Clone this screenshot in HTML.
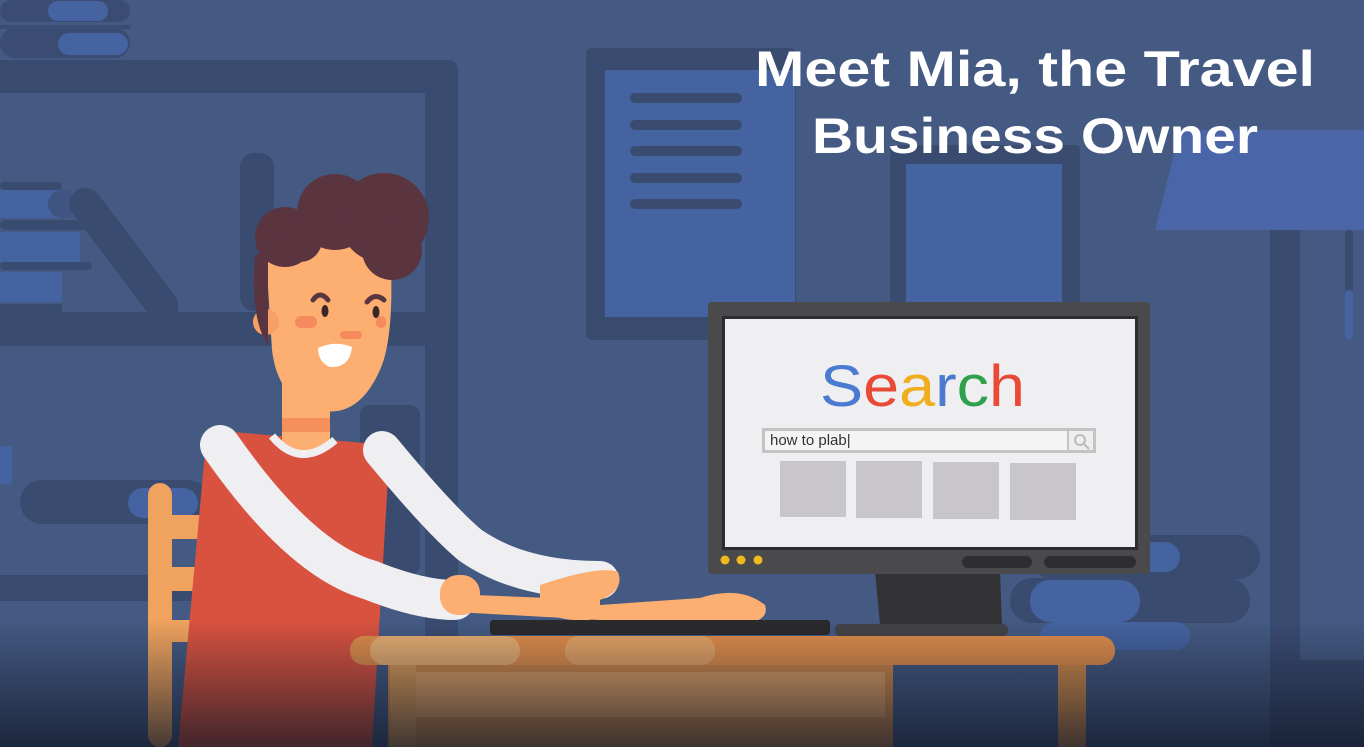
<!DOCTYPE html>
<html><head><meta charset="utf-8"><style>
html,body{margin:0;padding:0;width:1364px;height:747px;overflow:hidden;background:#445a82}
svg{display:block}
</style></head><body>
<svg width="1364" height="747" viewBox="0 0 1364 747" xmlns="http://www.w3.org/2000/svg">
<defs>
<linearGradient id="shade" x1="0" y1="0" x2="0" y2="1">
<stop offset="0" stop-color="#0e1626" stop-opacity="0"/>
<stop offset="1" stop-color="#0e1626" stop-opacity="0.75"/>
</linearGradient>
</defs>
<rect width="1364" height="747" fill="#445a82"/>
<rect x="0" y="0" width="130" height="22" rx="11" fill="#3b4c72"/>
<rect x="48" y="1" width="60" height="20" rx="10" fill="#4563a0"/>
<rect x="0" y="28" width="130" height="30" rx="15" fill="#3b4c72"/>
<rect x="58" y="33" width="70" height="22" rx="11" fill="#4563a0"/>
<rect x="0" y="25" width="130" height="4" fill="#3b4c72"/>
<path d="M0 60 H448 a10 10 0 0 1 10 10 V747 H425 V93 H0 Z" fill="#3a4b70"/>
<rect x="0" y="312" width="425" height="34" fill="#3a4b70"/>
<rect x="0" y="575" width="425" height="26" fill="#3a4b70"/>
<rect x="0" y="182" width="62" height="8" rx="4" fill="#3a4b70"/>
<rect x="0" y="190" width="62" height="28" fill="#4563a0"/>
<rect x="48" y="190" width="30" height="28" rx="14" fill="#3f5482"/>
<rect x="0" y="220" width="92" height="10" rx="5" fill="#3a4b70"/>
<rect x="0" y="232" width="80" height="30" fill="#4563a0"/>
<rect x="0" y="262" width="92" height="8" rx="4" fill="#3a4b70"/>
<rect x="0" y="272" width="62" height="30" fill="#4563a0"/>
<rect x="0" y="304" width="62" height="8" fill="#3a4b70"/>
<rect x="108" y="175" width="32" height="160" rx="16" fill="#3a4b70" transform="rotate(-37 124 255)"/>
<rect x="240" y="153" width="34" height="158" rx="14" fill="#3a4b70"/>
<rect x="20" y="480" width="190" height="44" rx="22" fill="#3a4b70"/>
<rect x="128" y="488" width="70" height="30" rx="15" fill="#4563a0"/>
<rect x="0" y="446" width="12" height="38" fill="#4563a0"/>
<rect x="360" y="405" width="60" height="170" rx="10" fill="#3a4b70"/>
<rect x="586" y="48" width="210" height="292" rx="6" fill="#3a4b70"/>
<rect x="605" y="70" width="190" height="247" fill="#4563a0"/>
<rect x="630" y="93" width="112" height="10" rx="5" fill="#3a4b70"/>
<rect x="630" y="120" width="112" height="10" rx="5" fill="#3a4b70"/>
<rect x="630" y="146" width="112" height="10" rx="5" fill="#3a4b70"/>
<rect x="630" y="173" width="112" height="10" rx="5" fill="#3a4b70"/>
<rect x="630" y="199" width="112" height="10" rx="5" fill="#3a4b70"/>
<rect x="890" y="145" width="190" height="180" rx="4" fill="#3a4b70"/>
<rect x="906" y="164" width="156" height="142" fill="#4563a0"/>
<polygon points="1180,130 1364,130 1364,230 1155,230" fill="#4a66a8"/>
<rect x="1345" y="230" width="8" height="110" rx="4" fill="#3a4b70"/>
<rect x="1345" y="290" width="8" height="50" rx="4" fill="#4563a0"/>
<rect x="1270" y="230" width="30" height="517" fill="#3a4b70"/>
<rect x="1300" y="660" width="64" height="87" fill="#3a4b70"/>
<rect x="1030" y="535" width="230" height="44" rx="22" fill="#3a4b70"/>
<rect x="1130" y="542" width="50" height="30" rx="15" fill="#4563a0"/>
<rect x="1010" y="578" width="240" height="45" rx="22" fill="#3a4b70"/>
<rect x="1030" y="580" width="110" height="42" rx="20" fill="#4563a0"/>
<rect x="1040" y="622" width="150" height="28" rx="14" fill="#4563a0"/>
<rect x="148" y="483" width="24" height="264" rx="12" fill="#f0a35e"/>
<rect x="160" y="515" width="50" height="24" fill="#f0a35e"/>
<rect x="160" y="567" width="50" height="24" fill="#f0a35e"/>
<rect x="160" y="620" width="50" height="22" fill="#f0a35e"/>
<polygon points="207,430 390,445 372,747 178,747" fill="#d9523f"/>
<path d="M282 370 L282 445 Q302 465 330 445 L330 370 Z" fill="#fdae71"/>
<path d="M282 418 L330 418 L330 432 L282 432Z" fill="#f5905a"/>
<path d="M272 436 Q300 470 335 440" stroke="#efeff2" stroke-width="8" fill="none"/>
<path d="M382 450 Q440 520 470 545 Q520 580 600 580" stroke="#efeff2" stroke-width="38" fill="none" stroke-linecap="round"/>
<path d="M220 445 Q300 560 370 580 Q420 600 455 600" stroke="#efeff2" stroke-width="40" fill="none" stroke-linecap="round"/>
<path d="M450 594 L600 600 L600 620 L455 612 Z" fill="#fdae71"/>
<rect x="440" y="575" width="40" height="40" rx="18" fill="#fdae71"/>
<path d="M540 585 Q600 565 618 572 Q625 590 600 600 L590 620 Q560 622 540 610Z" fill="#fdae71"/>
<path d="M600 605 L700 598 Q740 585 765 605 Q770 620 745 624 L600 622Z" fill="#fdae71"/>
<path d="M265 240 L390 245 Q395 330 382 365 Q360 420 318 410 Q278 400 272 350 Z" fill="#fdae71"/>
<circle cx="266" cy="322" r="13" fill="#f6a066"/>
<path d="M255 255 Q250 320 268 345 L268 250 Z" fill="#5a3540"/>
<circle cx="285" cy="237" r="30" fill="#5a3540"/>
<circle cx="335" cy="212" r="38" fill="#5a3540"/>
<circle cx="384" cy="218" r="45" fill="#5a3540"/>
<circle cx="300" cy="240" r="22" fill="#5a3540"/>
<circle cx="392" cy="250" r="30" fill="#5a3540"/>
<path d="M313 300 Q320 290 328 300" stroke="#5a3540" stroke-width="5" fill="none" stroke-linecap="round"/>
<path d="M367 302 Q375 292 384 300" stroke="#5a3540" stroke-width="5" fill="none" stroke-linecap="round"/>
<ellipse cx="325" cy="311" rx="3.5" ry="6" fill="#3a2628"/>
<ellipse cx="376" cy="312" rx="3.5" ry="6" fill="#3a2628"/>
<rect x="295" y="316" width="22" height="12" rx="6" fill="#f58a5e"/>
<rect x="340" y="331" width="22" height="8" rx="4" fill="#f58a5e"/>
<rect x="376" y="316" width="10" height="12" rx="5" fill="#f58a5e"/>
<path d="M318 348 Q335 340 352 347 Q350 368 330 367 Q318 362 318 348Z" fill="#fff"/>
<polygon points="875,572 1000,572 1002,625 880,625" fill="#333336"/>
<rect x="835" y="624" width="173" height="12" rx="5" fill="#444447"/>
<rect x="708" y="302" width="442" height="272" rx="4" fill="#4a4a4c"/>
<rect x="722" y="316" width="416" height="234" fill="#2d2d30"/>
<rect x="725" y="319" width="410" height="228" fill="#efeff1"/>
<circle cx="725" cy="560" r="4.5" fill="#f2b822"/>
<circle cx="741" cy="560" r="4.5" fill="#f2b822"/>
<circle cx="758" cy="560" r="4.5" fill="#f2b822"/>
<rect x="962" y="556" width="70" height="12" rx="6" fill="#2e2e30"/>
<rect x="1044" y="556" width="92" height="12" rx="6" fill="#2e2e30"/>
<text x="820" y="406" font-family="Liberation Sans, sans-serif" font-size="58" textLength="205" lengthAdjust="spacingAndGlyphs"><tspan fill="#4a7bd0">S</tspan><tspan fill="#e94a35">e</tspan><tspan fill="#f0ad1d">a</tspan><tspan fill="#4a7bd0">r</tspan><tspan fill="#2fa04e">c</tspan><tspan fill="#e94a35">h</tspan></text>
<rect x="762" y="428" width="334" height="25" fill="#c3c3c5"/>
<rect x="765" y="431" width="302" height="19" fill="#f4f4f5"/>
<rect x="1069" y="431" width="24" height="19" fill="#eeeeef"/>
<circle cx="1080" cy="440" r="5" stroke="#bbb" stroke-width="2" fill="none"/>
<line x1="1084" y1="444" x2="1089" y2="449" stroke="#bbb" stroke-width="2"/>
<text x="770" y="445" font-family="Liberation Sans, sans-serif" font-size="15" fill="#333">how to plab|</text>
<rect x="780" y="461" width="66" height="56" fill="#c8c6c8"/>
<rect x="856" y="461" width="66" height="57" fill="#c8c6c8"/>
<rect x="933" y="462" width="66" height="57" fill="#c8c6c8"/>
<rect x="1010" y="463" width="66" height="57" fill="#c8c6c8"/>
<rect x="490" y="620" width="340" height="15" rx="3" fill="#2a2a2c"/>
<rect x="388" y="663" width="505" height="84" fill="#cf8849"/>
<rect x="415" y="672" width="470" height="45" fill="#e0a064"/>
<rect x="1058" y="663" width="28" height="84" fill="#d38a4b"/>
<rect x="390" y="663" width="26" height="84" fill="#d99a58"/>
<rect x="350" y="636" width="765" height="29" rx="14" fill="#e08e4b"/>
<rect x="370" y="636" width="150" height="29" rx="14" fill="#e8ae72"/>
<rect x="565" y="636" width="150" height="29" rx="14" fill="#e6a565"/>
<rect x="0" y="620" width="1364" height="127" fill="url(#shade)"/>
<g font-family="Liberation Sans, sans-serif" font-size="50" font-weight="bold" fill="#fff">
<text x="755" y="86" textLength="560" lengthAdjust="spacingAndGlyphs">Meet Mia, the Travel</text>
<text x="812" y="153" textLength="446" lengthAdjust="spacingAndGlyphs">Business Owner</text>
</g>
</svg>
</body></html>
